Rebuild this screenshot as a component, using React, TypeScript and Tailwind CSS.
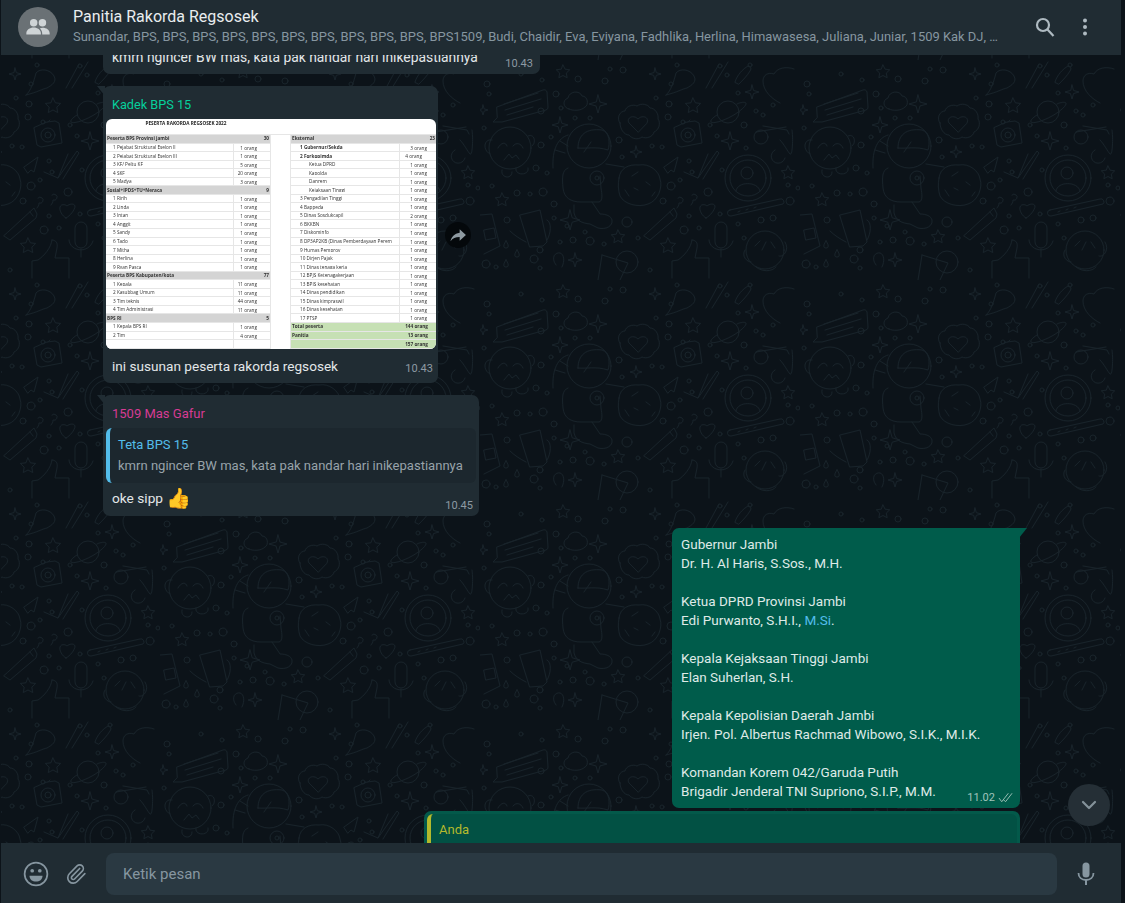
import React from "react";
import { Paperclip, ChevronDown } from "lucide-react";

const left: [string, string, string, number][] = [
  ["h", "Peserta  BPS Provinsi jambi", "30", 0],
  ["r", "1 Pejabat Struktural Eselon II", "1 orang", 0],
  ["r", "2 Pejabat Struktural Eselon III", "1 orang", 0],
  ["r", "3 KF/ Peltu KF", "5 orang", 0],
  ["r", "4 SKF", "20 orang", 0],
  ["r", "5 Madya", "3 orang", 0],
  ["h", " Sosial+IPDS+TU+Neraca", "9", 0],
  ["r", "1 Ririh", "1 orang", 0],
  ["r", "2 Linda", "1 orang", 0],
  ["r", "3 Intan", "1 orang", 0],
  ["r", "4 Anggit", "1 orang", 0],
  ["r", "5 Sandy", "1 orang", 0],
  ["r", "6 Tado", "1 orang", 0],
  ["r", "7 Mitha", "1 orang", 0],
  ["r", "8 Herlina", "1 orang", 0],
  ["r", "9 Ryan Pasca", "1 orang", 0],
  ["h", "Peserta  BPS Kabupaten/kota", "77", 0],
  ["r", "1 Kepala", "11 orang", 0],
  ["r", "2 Kasubbag Umum", "11 orang", 0],
  ["r", "3 Tim teknis", "44 orang", 0],
  ["r", "4 Tim Administrasi", "11 orang", 0],
  ["h", "BPS RI", "5", 0],
  ["r", "1 Kepala BPS RI", "1 orang", 0],
  ["r", "2 Tim", "4 orang", 0],
  ["r", "", "", 0],
];

const right: [string, string, string, number][] = [
  ["h", "Eksternal", "23", 0],
  ["b", "1 Gubernur/Sekda", "3 orang", 0],
  ["b", "2 Forkopimda", "4 orang", 0],
  ["r", "Ketua DPRD", "1 orang", 1],
  ["r", "Kapolda", "1 orang", 1],
  ["r", "Danrem", "1 orang", 1],
  ["r", "Kejaksaan Tinggi", "1 orang", 1],
  ["r", "3 Pengadilan Tinggi", "1 orang", 0],
  ["r", "4 Bappeda", "1 orang", 0],
  ["r", "5 Dinas Sosdukcapil", "2 orang", 0],
  ["r", "6 BKKBN", "1 orang", 0],
  ["r", "7 Diskominfo", "1 orang", 0],
  ["r", "8 DP3AP2KB (Dinas Pemberdayaan Perem", "1 orang", 0],
  ["r", "9 Humas Pemprov", "1 orang", 0],
  ["r", "10 Dirjen Pajak", "1 orang", 0],
  ["r", "11 Dinas tenaga kerja", "1 orang", 0],
  ["r", "12 BPJS Ketenagakerjaan", "1 orang", 0],
  ["r", "13 BPJS kesehatan", "1 orang", 0],
  ["r", "14 Dinas pendidikan", "1 orang", 0],
  ["r", "15 Dinas kimpraswil", "1 orang", 0],
  ["r", "16 Dinas kesehatan", "1 orang", 0],
  ["r", "17 PTSP", "1 orang", 0],
  ["g", "Total peserta", "144 orang", 0],
  ["g", "Panitia", "13 orang", 0],
  ["g", "", "157 orang", 0],
];

function SheetRow({ row, side }: { row: [string, string, string, number]; side: "l" | "r" }) {
  const [t, a, b, ind] = row;
  const bg = t === "h" ? "bg-[#d4d4d4]" : t === "g" ? "bg-[#c6e0b4]" : "bg-white";
  const strong = t === "h" || t === "g" || t === "b";
  const isBand = t === "h" || t === "g";
  return (
    <div className={`flex h-[8.55px] items-center whitespace-nowrap border-b border-[#e6e6e6] text-[4.7px] leading-none text-[#333] ${bg}`}>
      <div className={`min-w-0 flex-1 overflow-hidden ${strong ? "font-bold" : ""} ${isBand ? "pl-px" : ind ? "pl-[18px]" : side === "l" ? "pl-[7px]" : "pl-[9px]"}`}>{a}</div>
      {t === "h" ? (
        <div className="w-[20px] shrink-0 pr-px text-right font-bold">{b}</div>
      ) : t === "g" ? (
        <div className="w-[40px] shrink-0 pr-[8px] text-right font-bold">{b}</div>
      ) : (
        <div className={`w-[37px] shrink-0 self-stretch border-l border-[#e6e6e6] text-right leading-[8px] ${side === "l" ? "pr-[13px]" : a === "2 Forkopimda" ? "pr-[14px]" : "pr-[9px]"}`}>{b}</div>
      )}
    </div>
  );
}

function Sheet() {
  return (
    <div className="mx-[3px] h-[230px] w-[330px] overflow-hidden rounded-[6px] bg-white blur-[0.3px]" style={{ fontFamily: '"Open Sans", sans-serif' }}>
      <div className="flex h-[16px] items-start border-b border-[#e6e6e6]">
        <div className="mt-[2px] w-[164px] pr-[4px] text-center text-[4.7px] font-bold leading-none text-[#222]">PESERTA RAKORDA REGSOSEK 2022</div>
      </div>
      <div className="flex">
        <div className="w-[164px]">{left.map((r, i) => <SheetRow key={i} row={r} side="l" />)}</div>
        <div className="w-[21px] border-x border-[#e6e6e6]" />
        <div className="w-[145px]">{right.map((r, i) => <SheetRow key={i} row={r} side="r" />)}</div>
      </div>
    </div>
  );
}

const dots: [number, number, number][] = [
  [7,24,3],[9,34,2],[41,14,2],[62,20,2],[76,34,3],[98,19,3],[125,21,3],[130,9,2],[143,10,3],[176,38,2],[191,24,2],[189,44,3],[247,15,2],[258,33,2],[276,51,2],[283,55,2],[197,5,2],[240,6,2],[270,5,2],
  [4,68,2],[61,51,3],[81,48,2],[95,58,2],[110,58,2],[139,80,3],[142,97,2],[172,86,2],[182,87,2],[188,57,3],[203,62,2],[230,65,2],[237,76,2],[264,65,3],[293,45,2],[266,88,2],
  [61,85,3],[71,77,2],[56,108,3],[67,113,2],[12,126,2],[37,133,3],[50,134,2],[63,132,4],[74,144,3],[191,126,4],[209,101,2],[212,112,2],[228,132,4],[242,110,2],[200,120,2],[240,154,2],[308,125,2],[318,128,2],[310,141,4],
  [74,158,2],[27,160,3],[87,166,2],[105,172,2],[80,182,2],[93,180,3],[110,181,4],[124,184,2],[147,162,5],[158,178,2],[183,141,3],[204,170,4],[219,168,2],[209,156,2],[258,164,2],[281,160,3],[293,158,3],[264,178,2],[6,204,4],[54,199,4],[60,190,3],[16,207,2],[60,208,2],[170,210,2],
];

const stars4: [number, number, number][] = [[118,44,9],[80,65,8],[156,92,6],[175,14,6],[250,81,9],[272,32,7],[90,160,10],[95,200,7],[3,50,5]];
const stars5: [number, number, number][] = [[83,12,7],[213,46,8],[22,140,7],[138,177,7],[188,186,8],[308,113,7]];

function star4(x: number, y: number, r: number) {
  const k = r * 0.22;
  return `M${x} ${y - r}L${x + k} ${y - k}L${x + r} ${y}L${x + k} ${y + k}L${x} ${y + r}L${x - k} ${y + k}L${x - r} ${y}L${x - k} ${y - k}Z`;
}
function star5(x: number, y: number, r: number) {
  const p: string[] = [];
  for (let i = 0; i < 10; i++) {
    const a = -Math.PI / 2 + (i * Math.PI) / 5;
    const q = i % 2 ? r * 0.5 : r;
    p.push(`${(x + q * Math.cos(a)).toFixed(1)} ${(y + q * Math.sin(a)).toFixed(1)}`);
  }
  return `M${p.join("L")}Z`;
}

function Doodles() {
  return (
    <svg className="pointer-events-none absolute inset-0 h-full w-full" aria-hidden="true">
      <defs>
        <pattern id="dood" width="320" height="220" patternUnits="userSpaceOnUse" patternTransform="translate(159 5)">
          <g fill="none" stroke="#18232a" strokeWidth="1" strokeLinejoin="round" strokeLinecap="round">
            {dots.map(([x, y, r], i) => <circle key={i} cx={x} cy={y} r={r} />)}
            {stars4.map(([x, y, r], i) => <path key={i} d={star4(x, y, r)} />)}
            {stars5.map(([x, y, r], i) => <path key={i} d={star5(x, y, r)} />)}
            <path d="M17 47L63 30a3 3 0 0 1 4 2l1 15a3 3 0 0 1-2 3L22 62l-9 0 4-4z" />
            <path d="M24 44l34-11M25 50l36-11M27 55l26-8" />
            <path d="M89 49c-6-1-7-9-1-11 1-7 12-8 14-2 6 0 7 9 3 11-4 4-12 4-16 2z" />
            <path d="M140 63c-4-5 0-12 5-12 1-5 8-7 12-5 4-3 11-2 13 2 5 0 9 6 8 11 3 4 1 11-4 13-1 5-8 7-12 5-4 3-10 2-13-2-5 0-9-6-9-12z" />
            <path d="M158 72l-9-9c-3-5 4-9 9-4 5-5 12-1 9 4z" />
            <path d="M186 35c5-4 8-14 10-22 4-5 14-4 18 3 3 6-2 9-7 12-5 1-9 4-21 7zM226 28l13-24M232 28l16-26" />
            <path d="M255 22c2-7 8-13 13-16 2 0 4 2 2 5-3 5-7 9-11 13z" />
            <path d="M300 43c-8-4-17-12-17-22 0-6 5-9 11-7 3-6 12-8 20-5" />
            <circle cx="248" cy="52" r="11" />
            <path d="M237 55c-5 3-7 6-6 7 2 2 12-1 21-6s15-11 14-13c-1-1-5-1-9 1" />
            <path d="M202 64l5-2 8-1 4 2 3 20-21 4-4-2-3-17zM208 62l2-2" />
            <circle cx="208" cy="75" r="7" /><circle cx="208" cy="75" r="3" />
            <path d="M276 72l30-5M283 66l24 4 2 4" />
            <circle cx="281" cy="77" r="7" />
            <path d="M300 80c4 4 8 12 10 14 3 2 3-20 2-24M295 90a7 7 0 1 0 10 8" />
            <circle cx="30" cy="88" r="21" />
            <path d="M12 80c-8-2-10 10-2 14M48 76c6-3 9 6 4 10" />
            <path d="M18 88c3-6 8-6 9-2M33 86c3-4 8-3 10 2" />
            <path d="M22 110c-2 8 10 10 10 2M36 108c-2 8 14 8 12 0M24 100l5-6 3 4 4-3 3 4" />
            <circle cx="109" cy="86" r="22" />
            <path d="M98 88c0-13 8-20 24-18 8 2 8 14 6 20-12-4-22-1-30-2z" />
            <path d="M104 92l7-10" />
            <path d="M88 75c-10 3-16 14-15 33M80 81l8 5M75 90l10 3" />
            <path d="M88 108c-6 2-6 10-5 20 1 10 8 14 18 14h18c4-1 3-8 2-14l-1-12" />
            <path d="M94 145l0 8c2 8 8 10 16 11l8 4c8 2 15-2 14-8-1-4-6-6-12-6l-8-12" />
            <path d="M126 104l18 3" />
            <circle cx="117" cy="118" r="7" /><circle cx="117" cy="118" r="2" />
            <path d="M139 118c1-10 10-14 20-13 10-2 20 6 21 14 3 8-2 22-12 25-10 4-24 0-28-8-2-6-2-12-1-18z" />
            <path d="M152 116l6-4M166 122l4 3M154 128l4 2M145 130l4 6M172 136l3-4" />
            <path d="M184 107l14-10-4 15-3-2-3 3z" />
            <path d="M204 112l14 6 10-24M218 118l19-27 2 2-16 26" />
            <circle cx="268" cy="118" r="23" /><circle cx="268" cy="118" r="18" /><circle cx="267" cy="113" r="6" />
            <path d="M256 131c1-10 22-10 24 0" />
            <path d="M40 155l20-5 7 32-4 4-13 1zM67 160c5 2 4 14 0 20M30 171c4 4 10 8 16 11" />
            <path d="M198 138a3 3 0 1 1 1 5c0 2-1 4-2 5M212 135a3 3 0 1 1 1 5c0 2-1 4-2 5" />
            <path d="M226 158c-4-2-7-8-6-11 1-3 5-3 7-1 2-2 7-3 8 0 0 4-5 10-9 12z" />
            <path d="M250 150l50-11a3 3 0 0 1 3 5l-52 12a3 3 0 0 1-1-6zM258 152l2-1M266 150l2-1M274 148l2-1" />
            <path d="M168 172l26-24 3 6-1 4-26 22-6-4zM190 152l3 4" />
            <path d="M235 168a6 6 0 0 1 12 0v14a6 6 0 0 1-12 0zM229 180c1 12 20 14 24 1M241 197v-8" />
            <path d="M212 180c-1 8-8 16-14 20l-6 1 0 17M212 180c4 0 6 3 5 8l-2 10h14v20" />
            <circle cx="285" cy="190" r="19" />
            <path d="M265 190c-4 6 2 12 6 12M305 182c5 8-2 16-6 14M275 186l5-5M282 190l4-8M295 188l-4-6M276 207c6 5 16 5 20 0" />
            <path d="M122 195l26 8-8 17M122 195l-4 25" />
            <circle cx="147" cy="202" r="11" />
            <path d="M76 205c-6-8 0-13 4-12 4 1 5 8 2 14" />
            <path d="M26 181c-3 4-3 7 0 7s3-3 0-7zM37 190c-3 4-3 7 0 7s3-3 0-7zM26 200c-3 4-3 7 0 7s3-3 0-7z" />
            <path d="M0 155l12-1 8 32-16 8M4 170l10-2 2 10-10 2z" />
          </g>
        </pattern>
      </defs>
      <rect width="100%" height="100%" fill="url(#dood)" />
    </svg>
  );
}

function Tail({ side, color }: { side: "l" | "r"; color: string }) {
  return (
    <svg className={`absolute top-0 h-[10px] w-[8px] ${side === "l" ? "left-[-6px]" : "right-[-7px] -scale-x-100"}`} viewBox="0 0 8 10" aria-hidden="true">
      <path d="M8 0H0l8 10z" fill={color} />
    </svg>
  );
}

const outLines = [
  "Gubernur Jambi", "Dr. H. Al Haris, S.Sos., M.H.", "",
  "Ketua DPRD Provinsi Jambi", "LINK", "",
  "Kepala Kejaksaan Tinggi Jambi", "Elan Suherlan, S.H.", "",
  "Kepala Kepolisian Daerah Jambi", "Irjen. Pol. Albertus Rachmad Wibowo, S.I.K., M.I.K.", "",
  "Komandan Korem 042/Garuda Putih", "Brigadir Jenderal TNI Supriono, S.I.P., M.M.",
];

export default function App() {
  return (
    <div className="flex h-[903px] w-[1125px] flex-col overflow-hidden bg-[#0c1319] pl-[1px] pr-[4px] text-[#e3e7e9]" style={{ fontFamily: 'Roboto, "Noto Sans", sans-serif' }}>
      <header className="z-10 flex h-[55px] shrink-0 items-center bg-[#202c33] pb-[2px] pl-[17px] pr-[33px]">
        <div className="flex h-10 w-10 shrink-0 items-center justify-center rounded-full bg-[#6a7175]">
          <svg viewBox="0 0 24 24" className="h-[28px] w-[28px]" fill="#cfd4d6" aria-hidden="true">
            <circle cx="8.3" cy="8.3" r="3.2" /><circle cx="15.8" cy="8.3" r="3.2" />
            <path d="M2 17.5c0-3 3-5 6.3-5s6.2 2 6.2 5v1H2zM15.6 18.5v-1c0-1.8-.8-3.3-2-4.300.7-.4 1.500-.6 2.400-.6 3.200 0 6 1.800 6 4.700v1.200z" />
          </svg>
        </div>
        <div className="ml-[15px] min-w-0 flex-1">
          <div className="text-[16px] leading-[20px] text-[#e9edef]">Panitia Rakorda Regsosek</div>
          <div className="w-[928px] truncate text-[12.95px] leading-[20px] text-[#8696a0]">
            Sunandar, BPS, BPS, BPS, BPS, BPS, BPS, BPS, BPS, BPS, BPS, BPS1509, Budi, Chaidir, Eva, Eviyana, Fadhlika, Herlina, Himawasesa, Juliana, Juniar, 1509 Kak DJ, Kadek, Kak, Lia
          </div>
        </div>
        <svg viewBox="0 0 20 20" className="mr-[27px] h-[20px] w-[20px] shrink-0" fill="none" stroke="#aebac1" strokeWidth="2.2" aria-hidden="true">
          <circle cx="8" cy="8" r="6" /><path d="M12.500 12.500l6 6.500" />
        </svg>
        <svg viewBox="0 0 6 18" className="h-[18px] w-[6px] shrink-0" fill="#aebac1" aria-hidden="true">
          <circle cx="3" cy="2.500" r="2" /><circle cx="3" cy="9" r="2" /><circle cx="3" cy="15.500" r="2" />
        </svg>
      </header>

      <main className="relative min-h-0 flex-1 overflow-hidden">
        <Doodles />
        <div className="relative flex flex-col">
          <div className="ml-[102px] mt-[-25px] flex h-[44px] w-[437px] items-end rounded-[7px] bg-[#202c33] pb-[3px] pl-[9px] pr-[7px]">
            <span className="mb-[4px] flex-1 whitespace-nowrap text-[13.85px] leading-[19px]">kmrn ngincer BW mas, kata pak nandar hari inikepastiannya</span>
            <span className="text-[11px] leading-[15px] text-[#8d9aa3]">10.43</span>
          </div>

          <div className="relative ml-[102px] mt-[12px] w-[335px]">
            <Tail side="l" color="#202c33" />
            <div className="rounded-[7px] bg-[#202c33] pb-[7px] pt-[10px]">
              <div className="pl-[9px] text-[12.7px] leading-[18px] text-[#06cf9c]">Kadek BPS 15</div>
              <div className="mt-[5px]"><Sheet /></div>
              <div className="mt-[8px] flex items-end justify-between pl-[9px] pr-[5px]">
                <span className="text-[13.6px] leading-[19px]">ini susunan peserta rakorda regsosek</span>
                <span className="text-[11px] leading-[15px] text-[#8d9aa3]">10.43</span>
              </div>
            </div>
            <div className="absolute left-[342px] top-[136px] flex h-[26px] w-[26px] items-center justify-center rounded-full bg-[#04080b]">
              <svg viewBox="0 0 24 24" className="h-[20px] w-[20px]" fill="#8e9aa1" aria-hidden="true">
                <path d="M14 5v4.200C7.500 10 4 14.400 3 19.500c2.500-3.400 6-5 11-5V19l7.500-7z" />
              </svg>
            </div>
          </div>

          <div className="relative ml-[102px] mt-[12px] w-[376px] rounded-[7px] bg-[#202c33] px-[3px] pb-[3px] pt-[10px]">
            <Tail side="l" color="#202c33" />
            <div className="pl-[6px] text-[13px] leading-[18px] text-[#d63b94]">1509 Mas Gafur</div>
            <div className="mt-[5px] overflow-hidden rounded-[6px] border-l-[4px] border-[#53bdeb] bg-[#1c272e] py-[7px] pl-[8px] pr-[8px]">
              <div className="text-[13px] leading-[20px] text-[#53bdeb]">Teta BPS 15</div>
              <div className="mt-[1px] whitespace-nowrap text-[13.05px] leading-[20px] text-[#98a3aa]">kmrn ngincer BW mas, kata pak nandar hari inikepastiannya</div>
            </div>
            <div className="mt-[3px] flex items-end justify-between pb-[3px] pl-[6px] pr-[3px]">
              <span className="flex items-center gap-[3px] text-[13.7px] leading-[24px]">oke sipp <span className="text-[20px] leading-[24px]">👍</span></span>
              <span className="mb-[-3px] text-[11px] leading-[15px] text-[#8d9aa3]">10.45</span>
            </div>
          </div>

          <div className="relative ml-[671px] mt-[12px] h-[280px] w-[348px] rounded-[7px] rounded-tr-none bg-[#005c4b] pl-[9px] pt-[7px]">
            <Tail side="r" color="#005c4b" />
            {outLines.map((l, i) => (
              <div key={i} className="h-[19px] text-[13.5px] leading-[19px] text-[#dfeae7]">
                {l === "LINK" ? <>Edi Purwanto, S.H.I., <span className="text-[#53bdeb]">M.Si</span>.</> : l}
              </div>
            ))}
            <div className="absolute bottom-[3px] right-[7px] flex items-center gap-[3px] text-[11px] leading-[15px] text-[#9fc3ba]">
              11.02
              <svg viewBox="0 0 16 11" className="h-[11px] w-[15px]" fill="none" stroke="#9fc3ba" strokeWidth="1" aria-hidden="true">
                <path d="M1 6l3 4 7-9M6 8l2 2 7-9" />
              </svg>
            </div>
          </div>

          <div className="ml-[423px] mt-[3px] h-[60px] w-[596px] rounded-[7px] bg-[#03594a] p-[3px]">
            <div className="h-full overflow-hidden rounded-[6px] border-l-[4px] border-[#b4b92c] bg-[#025144] pl-[8px] pt-[7px] text-[13px] leading-[18px] text-[#b4b92c]">Anda</div>
          </div>
        </div>

        <div className="absolute bottom-[17px] left-[1067px] flex h-[42px] w-[42px] items-center justify-center rounded-full bg-[#252f36]">
          <ChevronDown className="h-[24px] w-[24px] text-[#84929a]" strokeWidth={2.2} />
        </div>
      </main>

      <footer className="z-10 flex h-[60px] shrink-0 items-center bg-[#202c33] pl-[22px] pr-[26px] pt-[2px]">
        <svg viewBox="0 0 24 24" className="h-[26px] w-[26px]" fill="none" stroke="#8696a0" strokeWidth="1.600" aria-hidden="true">
          <circle cx="12" cy="12" r="10.500" />
          <circle cx="8.500" cy="9" r="1.700" fill="#8696a0" stroke="none" />
          <circle cx="15.500" cy="9" r="1.700" fill="#8696a0" stroke="none" />
          <path d="M6 13.500h12c0 3.500-2.800 5.500-6 5.500s-6-2-6-5.500z" fill="#8696a0" stroke="none" />
        </svg>
        <Paperclip className="ml-[16px] h-[22px] w-[22px] text-[#8696a0]" strokeWidth={1.8} />
        <div className="ml-[19px] flex h-[42px] flex-1 items-center rounded-[8px] bg-[#2a3942] pl-[17px] text-[15px] text-[#8696a0]">Ketik pesan</div>
        <svg viewBox="0 0 18 24" className="ml-[20px] h-[24px] w-[18px]" aria-hidden="true">
          <rect x="5.500" y="0.500" width="7" height="15" rx="3.500" fill="#8696a0" />
          <path d="M1.500 11c0 4.500 3.200 7 7.500 7s7.500-2.500 7.500-7" fill="none" stroke="#8696a0" strokeWidth="1.800" />
          <path d="M9 18v5" stroke="#8696a0" strokeWidth="2" />
        </svg>
      </footer>
    </div>
  );
}
